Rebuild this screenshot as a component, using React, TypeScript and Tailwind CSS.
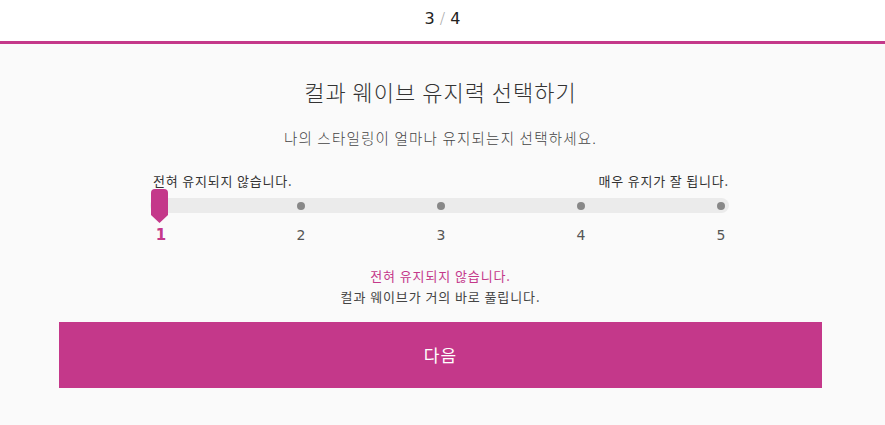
const KR = { fontFamily: '"Noto Sans CJK KR", "Noto Sans", sans-serif' };
const NUM = { fontFamily: '"DejaVu Sans", "Liberation Sans", sans-serif' };

const LEVELS = [1, 2, 3, 4, 5];

function Thumb() {
  return (
    <svg
      width="17"
      height="34"
      viewBox="0 0 17 34"
      className="absolute left-[1px] top-[-9px]"
    >
      <path d="M0 4 Q0 0 4 0 H13 Q17 0 17 4 V26 L8.5 34 L0 26 Z" fill="#c4388a" />
    </svg>
  );
}

export default function App() {
  const selected = 1;
  return (
    <div className="w-[885px] h-[425px] bg-[#fafafa] flex flex-col" style={KR}>
      <div className="h-[41px] bg-white flex items-center justify-center pb-[4px]">
        <span className="text-[16px] text-[#222]" style={NUM}>
          3 <span className="text-[#aaa] font-light">/</span> 4
        </span>
      </div>
      <div className="h-[3px] bg-[#c4388a]" />

      <h1 className="mt-[32px] text-center text-[22px] leading-[30px] font-light tracking-[1px] text-[#333] pr-[4px]">
        컬과 웨이브 유지력 선택하기
      </h1>
      <p className="mt-[21px] text-center text-[14.5px] leading-[22px] font-light tracking-[1.2px] text-[#444] pr-[4px]">
        나의 스타일링이 얼마나 유지되는지 선택하세요.
      </p>

      <div className="ml-[150px] w-[579px] mt-[23px] flex justify-between text-[13px] leading-[18px] tracking-[0.8px] text-[#333] pl-[3px]">
        <span>전혀 유지되지 않습니다.</span>
        <span>매우 유지가 잘 됩니다.</span>
      </div>

      <div className="ml-[150px] w-[579px] mt-[8px] relative h-[15px] rounded-full bg-[#ebebeb] flex items-center justify-between pl-[7px] pr-[4px]">
        {LEVELS.map((n) => (
          <span
            key={n}
            className={
              n === selected
                ? 'w-[8px] h-[8px] rounded-full'
                : 'w-[8px] h-[8px] rounded-full bg-[#888]'
            }
          />
        ))}
        <Thumb />
      </div>

      <div className="ml-[150px] w-[579px] mt-[13px] flex justify-between pl-[7px] pr-[4px] h-[18px]">
        {LEVELS.map((n) => (
          <span key={n} className="w-[8px] flex justify-center">
            <span
              className={
                n === selected
                  ? 'text-[15px] leading-[18px] font-semibold text-[#c4388a]'
                  : 'text-[14px] leading-[18px] text-[#555]'
              }
              style={NUM}
            >
              {n}
            </span>
          </span>
        ))}
      </div>

      <div className="mt-[21px] text-center text-[13px] leading-[21px] tracking-[0.9px] pr-[4px]">
        <p className="text-[#c4388a]">전혀 유지되지 않습니다.</p>
        <p className="text-[#444]">컬과 웨이브가 거의 바로 풀립니다.</p>
      </div>

      <button className="mt-[15px] ml-[59px] w-[763px] h-[66px] bg-[#c4388a] text-white text-[17px] tracking-[1px] flex items-center justify-center">
        다음
      </button>
    </div>
  );
}
